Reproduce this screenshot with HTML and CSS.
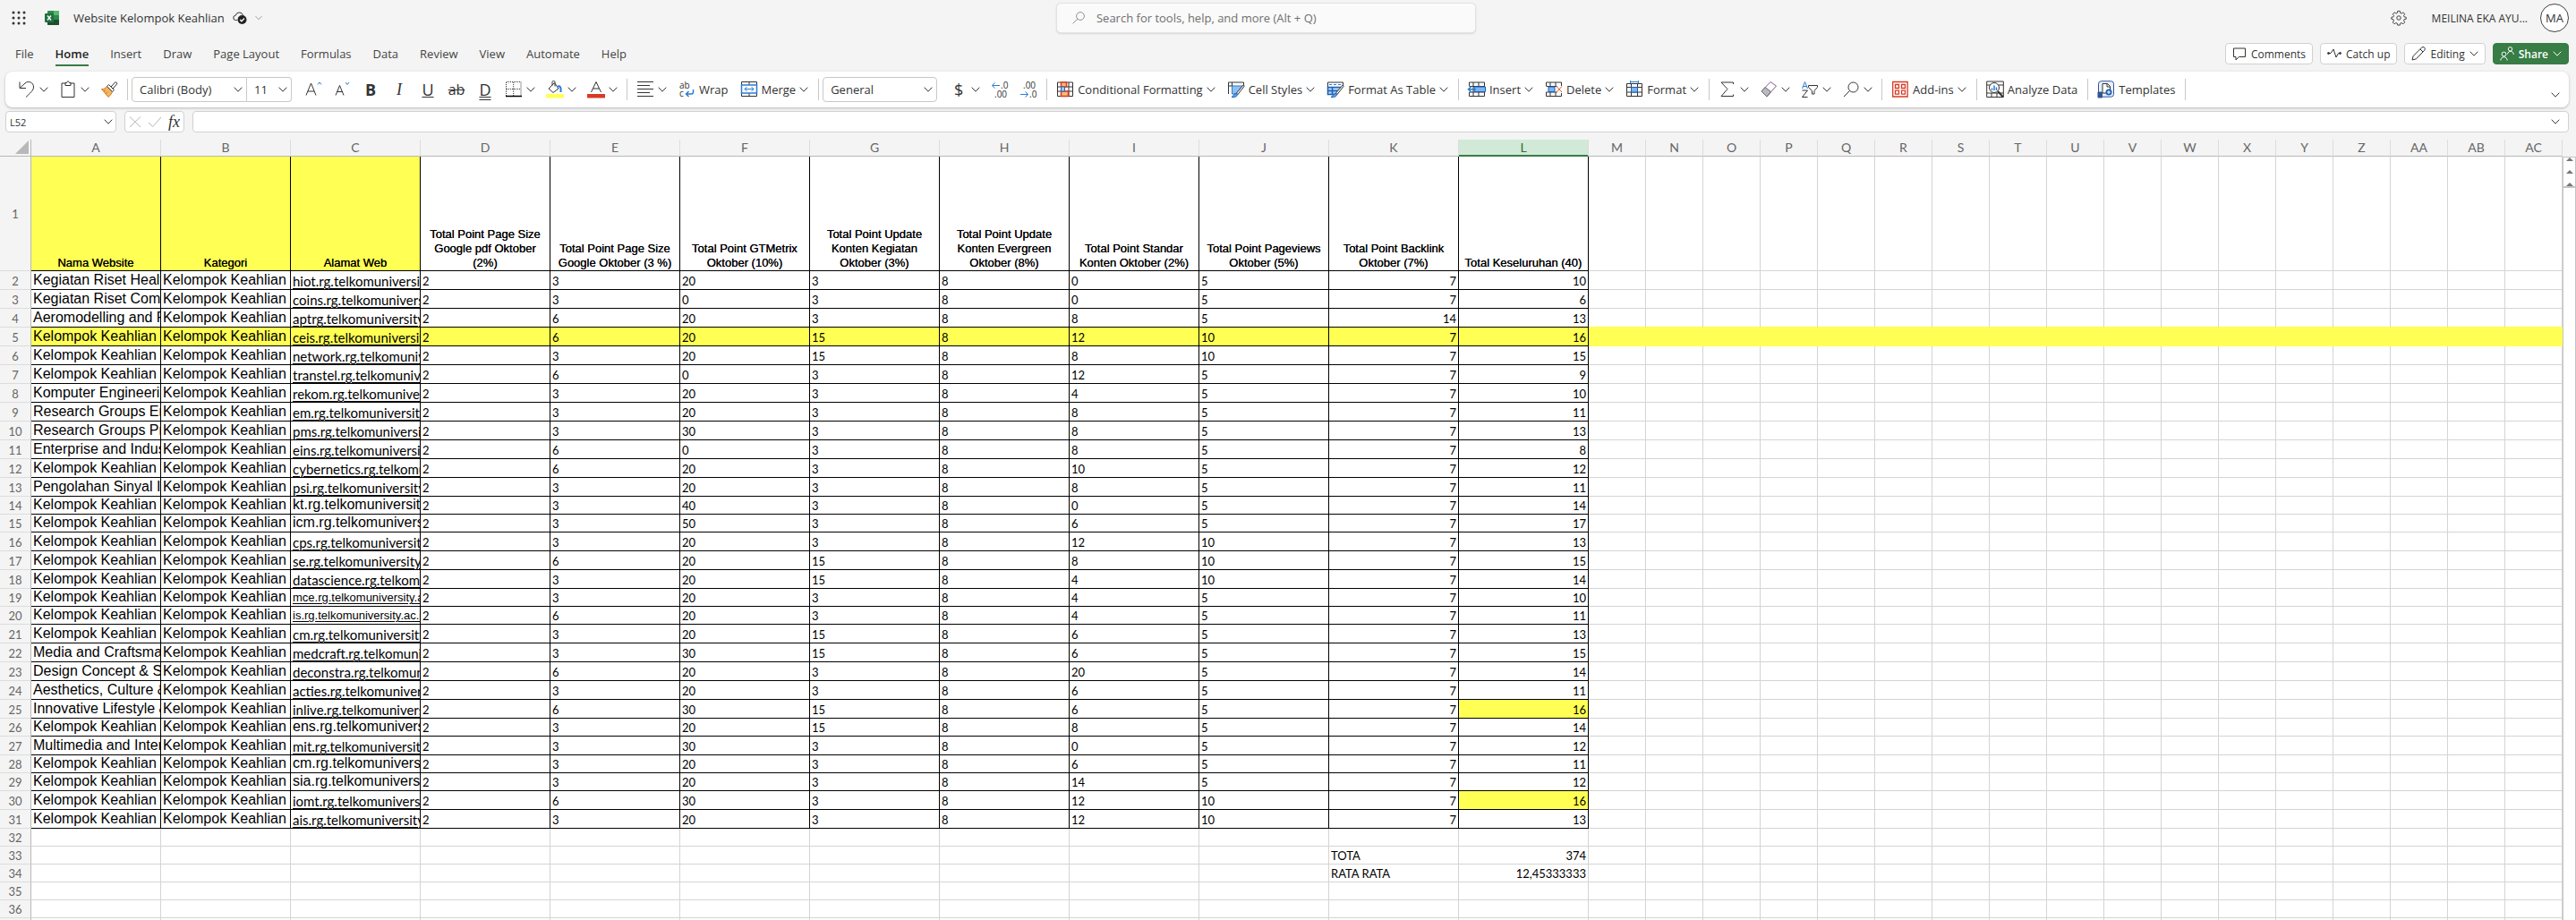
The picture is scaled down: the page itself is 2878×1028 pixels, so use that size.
FILE: index.html
```html
<!DOCTYPE html>
<html lang="en">
<head>
  <meta charset="UTF-8">
  <meta name="viewport" content="width=device-width, initial-scale=1.0">
  <title>Website Kelompok Keahlian</title>
  <link rel="stylesheet" href="styles.css">
</head>
<body>
  <!-- Shared symbols -->
  <svg class="defs" aria-hidden="true">
    <symbol id="chevron" viewBox="0 0 10 6"><path d="M.7.7 5 5.2 9.3.7"/></symbol>
    <symbol id="search" viewBox="0 0 20 20"><circle cx="12.5" cy="7.5" r="5.5"/><path d="M8.5 11.5 2 18"/></symbol>
  </svg>

  <header class="titlebar">
    <div class="title-left">
      <button class="plain" aria-label="App launcher">
        <svg class="waffle" viewBox="0 0 16 16"><path d="M2 2h.01M8 2h.01M14 2h.01M2 8h.01M8 8h.01M14 8h.01M2 14h.01M8 14h.01M14 14h.01"/></svg>
      </button>
      <svg class="logo" viewBox="0 0 16 16">
        <rect x="3" y="0" width="13" height="16" rx="1" fill="#2f8a4b"/>
        <rect x="10" y="0" width="6" height="5" fill="#53b96d"/>
        <rect x="3" y="10" width="13" height="6" rx="1" fill="#1d4f2e"/>
        <rect x="0" y="3" width="10" height="10" rx="1" fill="#1f7040"/>
        <path d="M3 5.5l4 5M7 5.5l-4 5" stroke="#fff" stroke-width="1.4"/>
      </svg>
      <button class="plain doc-name">Website Kelompok Keahlian
        <svg class="cloud" viewBox="0 0 16 16"><path d="M5 10.5H3.500a2.600 2.600 0 0 1-.3-5.200A4.300 4.300 0 0 1 11.500 5" fill="none" stroke="#333"/><circle cx="10.5" cy="10" r="5" fill="#222"/><path d="M8.200 10l1.700 1.700L13 8.500" fill="none" stroke="#fff" stroke-width="1.3"/></svg>
        <svg class="chev light"><use href="#chevron"/></svg>
      </button>
    </div>
    <label class="search">
      <svg class="icon-sm"><use href="#search"/></svg>
      <input type="search" placeholder="Search for tools, help, and more (Alt + Q)" aria-label="Search">
    </label>
    <div class="title-right">
      <button class="plain" aria-label="Settings">
        <svg class="gear" viewBox="0 0 20 20"><path d="M8.600 1.500h2.800l.5 2.400 1.500.6 2.100-1.300 2 2-1.400 2 .7 1.600 2.300.4v2.200l-2.300.5-.7 1.500 1.400 2.100-2 2-2.100-1.400-1.500.7-.5 2.200H8.600l-.5-2.200-1.500-.7-2.100 1.400-2-2 1.400-2.100-.7-1.500-2.300-.5V9.200l2.300-.4.7-1.600-1.400-2 2-2 2.100 1.300 1.500-.6z"/><circle cx="10" cy="10" r="2.5"/></svg>
      </button>
      <span class="user">MEILINA EKA AYU...</span>
      <button class="avatar">MA</button>
    </div>
  </header>

  <div class="tabbar">
    <nav class="tabs">
      <a href="#file">File</a>
      <a href="#home" class="active">Home</a>
      <a href="#insert">Insert</a>
      <a href="#draw">Draw</a>
      <a href="#layout">Page Layout</a>
      <a href="#formulas">Formulas</a>
      <a href="#data">Data</a>
      <a href="#review">Review</a>
      <a href="#view">View</a>
      <a href="#automate">Automate</a>
      <a href="#help">Help</a>
    </nav>
    <div class="actions">
      <button class="action">
        <svg viewBox="0 0 16 16"><path d="M1.500 2h13v9.500H7.500L4 15v-3.500H1.500z"/></svg>Comments
      </button>
      <button class="action">
        <svg viewBox="0 0 16 16"><path d="M2 7.500l2 0 3-4.500 3 9 2.500-4.500H14"/><circle cx="1.5" cy="7.5" r="1" fill="#333"/><circle cx="14.5" cy="7.5" r="1" fill="#333"/></svg>Catch up
      </button>
      <button class="action">
        <svg viewBox="0 0 16 16"><path d="M1 15l1.200-4.500L11.500 1.200a1.800 1.800 0 0 1 3.200 3L5.500 13.800zM10 3l3 3"/></svg>Editing
        <svg class="chev"><use href="#chevron"/></svg>
      </button>
      <button class="action share">
        <svg viewBox="0 0 16 16"><circle cx="4.5" cy="8.5" r="2.4"/><path d="M.8 15.500c0-5 7.400-5 7.400 0"/><circle cx="11.5" cy="2.8" r="2.2"/><path d="M8.500 8.500c.5-4.300 6.800-4.300 6.800.5"/></svg>Share
        <svg class="chev"><use href="#chevron"/></svg>
      </button>
    </div>
  </div>

  <div class="ribbon">
    <button class="tool" aria-label="Undo">
      <svg class="icon" viewBox="0 0 20 20"><path d="M2 1.500V8.500H9M2.300 8.200 8 3c4-3.500 9.500-.5 9.500 4 0 3-1 4.500-8.500 11.500"/></svg>
      <svg class="chev"><use href="#chevron"/></svg>
    </button>
    <button class="tool" aria-label="Paste">
      <svg class="icon" viewBox="0 0 20 20"><path d="M7 3H3v15.500h14V3h-4M7 5.500h6V2.500h-1.500c0-2-3-2-3 0H7z"/></svg>
      <svg class="chev"><use href="#chevron"/></svg>
    </button>
    <button class="tool" aria-label="Format painter">
      <svg class="icon" viewBox="0 0 20 20"><path d="M1.500 9.500c3 .5 4-1 6-3l6 6c-1 2-2 4-4.500 6z" fill="#f6b65c" stroke="#c7772b"/><path d="M4 12l2-1M6.500 14.500l2-2" stroke="#c7772b"/><path d="M7.500 6.500l2-2 6 6-2 2zM12 7l4.500-5c1-1 3 1 2 2L14 9" fill="#fff"/></svg>
    </button>
    <span class="sep"></span>
    <label class="combo font-name">
      <select aria-label="Font name"><option>Calibri (Body)</option></select>
      <svg class="chev"><use href="#chevron"/></svg>
    </label>
    <label class="combo font-size">
      <select aria-label="Font size"><option>11</option></select>
      <svg class="chev"><use href="#chevron"/></svg>
    </label>
    <button class="tool" aria-label="Grow font">
      <svg class="icon" viewBox="0 0 20 20"><path d="M2 16.500 7.500 3 13 16.500M4 12h7"/><path d="M15 4.500 17 2l2 2.500" stroke="#2b7cd3"/></svg>
    </button>
    <button class="tool" aria-label="Shrink font">
      <svg class="icon" viewBox="0 0 20 20"><path d="M3 16.500 7.500 5.500 12 16.500M4.500 12.500h6"/><path d="M14 2l2 2.500L18 2" stroke="#2b7cd3"/></svg>
    </button>
    <button class="tool glyph bold" aria-label="Bold">B</button>
    <button class="tool glyph italic" aria-label="Italic">I</button>
    <button class="tool glyph underline" aria-label="Underline">U</button>
    <button class="tool glyph strike" aria-label="Strikethrough">ab</button>
    <button class="tool glyph double" aria-label="Double underline">D</button>
    <button class="tool" aria-label="Borders">
      <svg class="icon" viewBox="0 0 20 20"><path d="M1.500 17V1.500h16.500V17M9.700 2v15M2 9.500h16" stroke-dasharray="1 1"/><path d="M1 17.500h18" stroke-width="1.5" stroke="#000"/></svg>
      <svg class="chev"><use href="#chevron"/></svg>
    </button>
    <button class="tool" aria-label="Fill color">
      <svg class="icon" viewBox="0 0 20 20"><path d="M3 9l6.500-6.500L14 9l-6 4.500zM7 5.500V1.500c0-1.500 3-1.500 3 0v5"/><path d="M12.500 7c3-2 4.500 0 4 6" stroke="#2b7cd3" stroke-width="2"/><path d="M0 15h20v4.500H0z" fill="#ffff54" stroke="none"/></svg>
      <svg class="chev"><use href="#chevron"/></svg>
    </button>
    <button class="tool" aria-label="Font color">
      <svg class="icon" viewBox="0 0 20 20"><path d="M4.500 13 10 1.500 15.500 13M6.500 9h7"/><path d="M0 15h20v4.500H0z" fill="#d83b23" stroke="none"/></svg>
      <svg class="chev"><use href="#chevron"/></svg>
    </button>
    <span class="sep"></span>
    <button class="tool" aria-label="Align">
      <svg class="icon" viewBox="0 0 20 20"><path d="M1 1.500h18M1 5.500h14M1 9.500h18M1 13.500h14M1 17.500h18"/></svg>
      <svg class="chev"><use href="#chevron"/></svg>
    </button>
    <button class="tool named">
      <svg class="icon" viewBox="0 0 20 20"><text x="2" y="9" class="mini">ab</text><text x="2" y="18" class="mini">c</text><path d="M17.500 10v3c0 1.500-1 2-2 2H10M12.500 12 9.500 15l3 3" stroke="#2b7cd3" stroke-width="1.5"/></svg>Wrap
    </button>
    <button class="tool named">
      <svg class="icon" viewBox="0 0 20 20"><path d="M1.500 1.500h17v16h-17zM10 1.500V5M10 14v3.500"/><path d="M1.500 5h17v9h-17z" fill="#fff" stroke="#2b7cd3" stroke-width="1.5"/><path d="M5 9.500h10M7.500 7 5 9.500 7.500 12M12.500 7 15 9.500 12.500 12" stroke="#2b7cd3"/></svg>Merge
      <svg class="chev"><use href="#chevron"/></svg>
    </button>
    <span class="sep"></span>
    <label class="combo format">
      <select aria-label="Number format"><option>General</option></select>
      <svg class="chev"><use href="#chevron"/></svg>
    </label>
    <button class="tool" aria-label="Currency">
      <span class="glyph">$</span>
      <svg class="chev"><use href="#chevron"/></svg>
    </button>
    <button class="tool" aria-label="Increase decimal">
      <svg class="icon" viewBox="0 0 20 20"><path d="M10 5.500H2M4.500 2.500l-3 3 3 3" stroke="#2b7cd3"/><text x="11" y="9" class="mini">.0</text><text x="4" y="19" class="mini">.00</text></svg>
    </button>
    <button class="tool" aria-label="Decrease decimal">
      <svg class="icon" viewBox="0 0 20 20"><path d="M1 15.500h8M6.500 12.500l3 3-3 3" stroke="#2b7cd3"/><text x="4" y="9" class="mini">.00</text><text x="11" y="19" class="mini">.0</text></svg>
    </button>
    <span class="sep"></span>
    <button class="tool named">
      <svg class="icon" viewBox="0 0 20 20"><path d="M1.500 2h17v15.500h-17zM5.500 2v15M14 2v15M1.500 7h17M1.500 12h17"/><path d="M5.500 2h6v5h-6zM5.500 12h8v5.500h-8z" fill="#f7bd76" stroke="#d83b23" stroke-width="1.5"/><path d="M5.500 7h4v5h-4z" fill="#9cc8f5" stroke="#2b63b8"/></svg>Conditional Formatting
      <svg class="chev"><use href="#chevron"/></svg>
    </button>
    <button class="tool named">
      <svg class="icon" viewBox="0 0 20 20"><path d="M1.500 15V2h17v5M5.500 2v12M1.500 6h5"/><path d="M5.500 6H17l-7 9H5.500z" fill="#8fc0f4" stroke="#2b7cd3"/><path d="M18.500 4.500 10.500 14l1.500 1.500 7-9z" fill="#fff"/><path d="M5 18.500c2 0 2-4.500 5.500-4 2.500 2-1 5-5.500 4z" fill="#5aa2ea" stroke="#1e5fb3"/></svg>Cell Styles
      <svg class="chev"><use href="#chevron"/></svg>
    </button>
    <button class="tool named">
      <svg class="icon" viewBox="0 0 20 20"><path d="M1.500 7V2h17v4"/><path d="M3 4.500h14" stroke="#2b7cd3" stroke-dasharray="3 2"/><path d="M1.500 7.500H17l-6 8H1.500zM1.500 11.500h12M6.500 7.500v8" fill="#a9d0f7" stroke="#1e5fb3" stroke-width="1.5"/><path d="M18.500 4.500 10.500 14l1.500 1.500 7-9z" fill="#fff"/><path d="M5 18.500c2 0 2-4.500 5.500-4 2.500 2-1 5-5.500 4z" fill="#5aa2ea" stroke="#1e5fb3"/></svg>Format As Table
      <svg class="chev"><use href="#chevron"/></svg>
    </button>
    <span class="sep"></span>
    <button class="tool named">
      <svg class="icon" viewBox="0 0 20 20"><path d="M1.500 6V2h17v15.500h-17V13M6 2v15.500M12 2v15.500M1.500 6.500h17M1.500 13h17"/><path d="M7 7h12.500v5.500H7z" fill="#79b5f2" stroke="#1e5fb3"/><path d="M9 9.700H1M4 6.500l-3.500 3.200L4 13" stroke="#2b7cd3" stroke-width="1.5"/></svg>Insert
      <svg class="chev"><use href="#chevron"/></svg>
    </button>
    <button class="tool named">
      <svg class="icon" viewBox="0 0 20 20"><path d="M1.500 6V2h17v4M1.500 13v4.500h17V14M6 2v4M12 2v4M6 13v4.500M12 13v4.500M1.500 6.500h12M1.500 13h12"/><path d="M4 7h7v5.500H4z" fill="#79b5f2" stroke="#1e5fb3"/><path d="M13 6.500l6 6.500M19 6.500 13 13" stroke="#d9591c"/></svg>Delete
      <svg class="chev"><use href="#chevron"/></svg>
    </button>
    <button class="tool named">
      <svg class="icon" viewBox="0 0 20 20"><path d="M1.500 3.500h17v14h-17zM6.500 3.500v14M13.500 3.500v14M1.500 7.500h17M1.500 13h17"/><path d="M6.500 7.500h7V13h-7z" fill="#79b5f2" stroke="#1e5fb3"/><path d="M5.500 0v3M14.500 0v3M6 1.500h8" stroke="#2b7cd3"/></svg>Format
      <svg class="chev"><use href="#chevron"/></svg>
    </button>
    <span class="sep"></span>
    <button class="tool" aria-label="AutoSum">
      <svg class="icon" viewBox="0 0 20 20"><path d="M16.500 4V2H3l7 7.500-7 8h13.500v-2"/></svg>
      <svg class="chev"><use href="#chevron"/></svg>
    </button>
    <button class="tool" aria-label="Clear">
      <svg class="icon" viewBox="0 0 20 20"><path d="M2 12 12 1.500 18.500 6 8 18z" fill="#fff" stroke="#8a5a93"/><path d="M2 12l4-4.500 6.500 5L8 18z" fill="#b9b9c4" stroke="#666"/></svg>
      <svg class="chev"><use href="#chevron"/></svg>
    </button>
    <button class="tool" aria-label="Sort and filter">
      <svg class="icon" viewBox="0 0 20 20"><path d="M1.500 9 4.500 1.500l3 7.500M2.500 6.500h4" stroke="#2b7cd3"/><path d="M1.500 11h6l-6 7.500h6M8.500 5.500h10v2l-3.500 4V15h-2.500v-3.500l-4-4z"/></svg>
      <svg class="chev"><use href="#chevron"/></svg>
    </button>
    <button class="tool" aria-label="Find">
      <svg class="icon"><use href="#search"/></svg>
      <svg class="chev"><use href="#chevron"/></svg>
    </button>
    <span class="sep"></span>
    <button class="tool named">
      <svg class="icon" viewBox="0 0 20 20"><path d="M1.700 1.500h16.500v16.500H1.700zM4.500 4.500h4v4h-4zM11.500 4.500h4v4h-4zM4.500 11.200h4v4h-4zM11.500 11.200h4v4h-4z" stroke="#d83b23" stroke-width="1.3"/></svg>Add-ins
      <svg class="chev"><use href="#chevron"/></svg>
    </button>
    <span class="sep"></span>
    <button class="tool named">
      <svg class="icon" viewBox="0 0 20 20"><path d="M.7 1h18.600v17.500H.7zM.7 5h18.600M.7 14h18.600M6 14v4.500M12 14v4.500"/><circle cx="9" cy="8" r="5.5" fill="#fff"/><path d="M6.500 11V8.500M9 11V5.500M11.500 11V7.500" stroke="#2b7cd3" stroke-width="1.5"/><path d="M13 12l6 6.500" stroke-width="2"/></svg>Analyze Data
    </button>
    <span class="sep"></span>
    <button class="tool named">
      <svg class="icon" viewBox="0 0 20 20"><rect x="1.5" y=".7" width="17" height="17.5" rx="3" fill="#e9f0fa" stroke="#2f5597"/><path d="M6 3.500h5.500l3 3V14H6z" fill="#fff"/><path d="M11 3.500v3.500h3.500"/><circle cx="13" cy="13" r="3.5" fill="#1e5fb3" stroke="none"/><path d="M13 11v4M11 13h4" stroke="#fff"/><rect x=".5" y="12.5" width="5.5" height="7" rx="1" fill="#2f5597" stroke="none"/></svg>Templates
    </button>
    <span class="sep"></span>
    <button class="plain collapse" aria-label="Ribbon options"><svg class="chev"><use href="#chevron"/></svg></button>
  </div>

  <div class="formula-row">
    <div class="box name-box">
      <input type="text" value="L52" aria-label="Name box">
      <button class="plain" aria-label="Names"><svg class="chev"><use href="#chevron"/></svg></button>
    </div>
    <div class="box fx-box">
      <button class="plain" aria-label="Cancel"><svg class="mark" viewBox="0 0 14 14"><path d="M1 1.500l12 11.500M13 1.500 1 13"/></svg></button>
      <button class="plain" aria-label="Enter"><svg class="mark" viewBox="0 0 14 14"><path d="M0 8l4.500 4.500L14 2"/></svg></button>
      <button class="plain fx" aria-label="Insert function">fx</button>
    </div>
    <div class="box formula">
      <input type="text" aria-label="Formula bar">
      <button class="plain" aria-label="Expand"><svg class="chev"><use href="#chevron"/></svg></button>
    </div>
  </div>

  <main class="workarea">
    <table class="sheet">
      <colgroup>
        <col class="col-index">
        <col class="col-wide" span="12">
        <col class="col-std" span="17">
      </colgroup>
      <thead></thead>
      <tbody></tbody>
    </table>
    <div class="scroll">
      <div class="scroll-top"><i></i><i></i><i></i></div>
      <div class="scroll-track"></div>
    </div>
  </main>

  <script src="script.js"></script>
</body>
</html>
```
FILE: styles.css
```css
* {
  box-sizing: border-box;
}

body {
  margin: 0;
  height: 100vh;
  display: flex;
  flex-direction: column;
  overflow: hidden;
  background: #f4f4f4;
  color: #333;
  font-family: "Open Sans", "Noto Sans", sans-serif;
  font-size: 13px;
}

button,
input,
select {
  font: inherit;
  color: inherit;
}

svg {
  fill: none;
  stroke: #333;
  flex: none;
}

.defs {
  position: absolute;
  width: 0;
  height: 0;
}

.plain {
  display: flex;
  align-items: center;
  padding: 0;
  border: 0;
  background: none;
}

.chev {
  width: 10px;
  height: 6px;
}

.chev.light {
  width: 8px;
  stroke: #888;
}

/* Title bar */
.titlebar {
  display: grid;
  grid-template-columns: 41% 469px 1fr;
  align-items: center;
  height: 40px;
}

.title-left {
  display: flex;
  align-items: center;
  padding-left: 13px;
}

.waffle {
  width: 16px;
  height: 16px;
  stroke-width: 3;
  stroke-linecap: round;
}

.logo {
  width: 16px;
  height: 16px;
  margin: 0 16px 0 21px;
  stroke: none;
}

.doc-name {
  gap: 9px;
}

.cloud {
  width: 16px;
  height: 16px;
  stroke: none;
}

.search {
  display: flex;
  align-items: center;
  gap: 10px;
  height: 34px;
  padding: 0 16px;
  background: #fafafa;
  border: 1px solid #e2e2e2;
  border-radius: 5px;
  box-shadow: 0 1px 2px rgba(0, 0, 0, 0.12);
}

.search input {
  flex: 1;
  border: 0;
  outline: 0;
  background: none;
}

.search input::placeholder {
  color: #6f6f6f;
}

.icon-sm {
  width: 16px;
  height: 16px;
  stroke: #777;
}

.title-right {
  display: flex;
  align-items: center;
  justify-content: flex-end;
  padding-right: 8px;
}

.gear {
  width: 18px;
  height: 18px;
}

.user {
  margin: 0 14px 0 28px;
  font-size: 12px;
}

.avatar {
  width: 32px;
  height: 32px;
  padding: 0;
  border: 1px solid #444;
  border-radius: 50%;
  background: #fff;
}

/* Tabs */
.tabbar {
  display: flex;
  justify-content: space-between;
  align-items: center;
  height: 40px;
  padding: 0 8px 0 17px;
}

.tabs {
  display: flex;
  gap: 24px;
}

.tabs a {
  padding: 3px 0 2px;
  color: #444;
  line-height: 20px;
  text-decoration: none;
  border-bottom: 2px solid transparent;
}

.tabs .active {
  color: #222;
  font-weight: 600;
  border-color: #377d45;
}

.actions {
  display: flex;
  gap: 8px;
}

.action {
  display: flex;
  align-items: center;
  gap: 5px;
  height: 24px;
  padding: 0 7px;
  background: #fff;
  border: 1px solid #d1d1d1;
  border-radius: 4px;
  font-size: 12px;
}

.action svg {
  width: 16px;
  height: 16px;
}

.action .chev {
  width: 10px;
  height: 6px;
}

.share {
  color: #fff;
  background: #377d45;
  border-color: #377d45;
  font-weight: 600;
}

.share svg {
  stroke: #fff;
}

/* Ribbon */
.ribbon {
  display: flex;
  align-items: center;
  height: 40px;
  margin: 0 8px 0 6px;
  padding: 0 10px 0 8px;
  background: #fff;
  border-radius: 8px;
  box-shadow: 0 1px 3px rgba(0, 0, 0, 0.25);
  flex: none;
  white-space: nowrap;
}

.tool {
  display: flex;
  align-items: center;
  gap: 4px;
  margin: 0 6px;
  padding: 0;
  border: 0;
  background: none;
}

.named {
  margin-right: 7px;
}

.icon {
  width: 20px;
  height: 20px;
  overflow: visible;
}

.mini {
  fill: #333;
  stroke: none;
  font-size: 10px;
}

.sep {
  width: 1px;
  height: 24px;
  margin: 0 4px;
  background: #c8c8c8;
}

.combo {
  display: flex;
  align-items: center;
  height: 28px;
  padding: 0 4px 0 8px;
  border: 1px solid #c8c8c8;
  border-radius: 4px;
}

.combo select {
  flex: 1;
  min-width: 0;
  padding: 0;
  border: 0;
  background: none;
  appearance: none;
}

.font-name {
  width: 129px;
  border-radius: 4px 0 0 4px;
}

.font-size {
  width: 50px;
  margin-right: 8px;
  border-left: 0;
  border-radius: 0 4px 4px 0;
}

.format {
  width: 128px;
  margin-right: 8px;
}

.glyph {
  justify-content: center;
  min-width: 20px;
  font-size: 18px;
  line-height: 20px;
}

.bold {
  font-weight: 700;
}

.italic {
  font-family: "Liberation Serif", serif;
  font-style: italic;
}

.underline {
  text-decoration: underline;
}

.strike {
  font-size: 16px;
  text-decoration: line-through;
}

.double {
  text-decoration: underline double;
}

.collapse {
  align-self: flex-end;
  margin: 0 0 11px auto;
}

/* Formula bar */
.formula-row {
  display: flex;
  padding: 4px 8px 8px 6px;
}

.box {
  display: flex;
  align-items: center;
  height: 24px;
  padding: 0 9px 0 4px;
  background: #fff;
  border: 1px solid #d1d1d1;
  border-radius: 4px;
}

.box input {
  flex: 1;
  min-width: 0;
  padding: 0;
  border: 0;
  outline: 0;
  background: none;
}

.name-box {
  width: 124px;
  padding-right: 3px;
  font-size: 11px;
}

.fx-box {
  width: 67px;
  gap: 8px;
  margin: 0 9px;
}

.formula {
  flex: 1;
}

.mark {
  width: 14px;
  height: 14px;
  stroke: #b5b5b5;
}

.fx {
  font-family: "Liberation Serif", serif;
  font-size: 18px;
  font-style: italic;
  line-height: 20px;
}

/* Sheet */
.workarea {
  display: flex;
  flex: 1;
  min-height: 0;
  overflow: hidden;
  align-items: flex-start;
}

.sheet {
  width: 2863px;
  flex: none;
  table-layout: fixed;
  border-spacing: 0;
  color: #000;
  font-family: Lato, sans-serif;
  font-size: 13px;
  line-height: 18px;
}

.col-index {
  width: 35px;
}

.col-wide {
  width: 145px;
}

.col-std {
  width: 64px;
}

.sheet th {
  padding: 0;
  background: #f4f4f4;
  color: #666;
  font-weight: 400;
}

.sheet thead th {
  height: 19px;
  font-size: 14px;
  border-right: 1px solid #dcdcdc;
  border-bottom: 1px solid #b8b8b8;
}

.sheet thead .corner {
  padding: 0 2px 2px 0;
  border-right-color: #b8b8b8;
}

.corner svg {
  display: block;
  width: 15px;
  height: 15px;
  margin-left: auto;
  fill: #b8b8b8;
  stroke: none;
}

.sheet thead .selected {
  background: #d2e9d8;
  color: #2f6a3c;
  border-bottom-color: #377d45;
  box-shadow: inset 0 -1px #377d45;
}

.sheet tbody th {
  border-right: 1px solid #b8b8b8;
  border-bottom: 1px solid #dcdcdc;
  vertical-align: bottom;
}

.sheet td {
  padding: 0 2px;
  overflow: hidden;
  white-space: nowrap;
  vertical-align: bottom;
  background: #fff;
  border-right: 1px solid #d4d4d4;
  border-bottom: 1px solid #d4d4d4;
}

.sheet tbody tr {
  height: 21px;
}

.sheet tbody .short {
  height: 20px;
}

.sheet tbody .head {
  height: 128px;
}

.sheet .head th {
  vertical-align: middle;
}

.sheet .head td {
  font-family: "Liberation Sans", Arial, sans-serif;
  line-height: 16px;
  text-align: center;
  text-shadow: 0 0 0 #000;
  white-space: normal;
}

.sheet .filled {
  border-color: #000;
}

.sheet .yellow {
  background: #ffff54;
}

.sheet .wash {
  border-color: #ffff54;
}

.sheet .wash-below {
  border-bottom-color: #ffff54;
}

.sheet .link {
  font-size: 15px;
}

.sheet .arial {
  padding-bottom: 1px;
  font-family: "Liberation Sans", Arial, sans-serif;
  font-size: 16px;
}

.sheet .arial-small {
  font-family: "Liberation Sans", Arial, sans-serif;
  font-size: 13px;
}

.sheet .number {
  text-align: right;
}

.sheet a {
  color: inherit;
  text-underline-offset: 2px;
}

.sheet .arial a {
  text-decoration: none;
}

/* Scrollbar */
.scroll {
  display: flex;
  flex: 1;
  flex-direction: column;
  align-self: stretch;
  padding-top: 19px;
}

.scroll-top {
  display: flex;
  flex-direction: column;
  justify-content: space-between;
  align-items: center;
  height: 35px;
  background: #fff;
  border: 1px solid #c4c4c4;
  border-bottom-width: 2px;
}

.scroll-top i {
  border: 4px solid transparent;
  border-top: 0;
  border-bottom-color: #777;
}

.scroll-track {
  flex: 1;
  background: #fff;
  border: 1px solid #c4c4c4;
  border-width: 0 1px;
}
```
FILE: script.js
```javascript
const headings = [
  'Nama Website', 'Kategori', 'Alamat Web',
  'Total Point Page Size Google pdf Oktober (2%)',
  'Total Point Page Size Google Oktober (3 %)',
  'Total Point GTMetrix Oktober (10%)',
  'Total Point Update Konten Kegiatan Oktober (3%)',
  'Total Point Update Konten Evergreen Oktober (8%)',
  'Total Point Standar Konten Oktober (2%)',
  'Total Point Pageviews Oktober (5%)',
  'Total Point Backlink Oktober (7%)',
  'Total Keseluruhan (40)'
];

// name, subdomain, points D-L
const rows = [
  ['Kegiatan Riset Health', 'hiot.rg', 2, 3, 20, 3, 8, 0, 5, 7, 10],
  ['Kegiatan Riset Comp', 'coins.rg', 2, 3, 0, 3, 8, 0, 5, 7, 6],
  ['Aeromodelling and P', 'aptrg', 2, 6, 20, 3, 8, 8, 5, 14, 13],
  ['Kelompok Keahlian', 'ceis.rg', 2, 6, 20, 15, 8, 12, 10, 7, 16],
  ['Kelompok Keahlian', 'network.rg', 2, 3, 20, 15, 8, 8, 10, 7, 15],
  ['Kelompok Keahlian', 'transtel.rg', 2, 6, 0, 3, 8, 12, 5, 7, 9],
  ['Komputer Engineering', 'rekom.rg', 2, 3, 20, 3, 8, 4, 5, 7, 10],
  ['Research Groups En', 'em.rg', 2, 3, 20, 3, 8, 8, 5, 7, 11],
  ['Research Groups Pr', 'pms.rg', 2, 3, 30, 3, 8, 8, 5, 7, 13],
  ['Enterprise and Indus', 'eins.rg', 2, 6, 0, 3, 8, 8, 5, 7, 8],
  ['Kelompok Keahlian', 'cybernetics.rg', 2, 6, 20, 3, 8, 10, 5, 7, 12],
  ['Pengolahan Sinyal I', 'psi.rg', 2, 3, 20, 3, 8, 8, 5, 7, 11],
  ['Kelompok Keahlian', 'kt.rg', 2, 3, 40, 3, 8, 0, 5, 7, 14],
  ['Kelompok Keahlian', 'icm.rg', 2, 3, 50, 3, 8, 6, 5, 7, 17],
  ['Kelompok Keahlian', 'cps.rg', 2, 3, 20, 3, 8, 12, 10, 7, 13],
  ['Kelompok Keahlian', 'se.rg', 2, 6, 20, 15, 8, 8, 10, 7, 15],
  ['Kelompok Keahlian', 'datascience.rg', 2, 3, 20, 15, 8, 4, 10, 7, 14],
  ['Kelompok Keahlian', 'mce.rg', 2, 3, 20, 3, 8, 4, 5, 7, 10],
  ['Kelompok Keahlian', 'is.rg', 2, 6, 20, 3, 8, 4, 5, 7, 11],
  ['Kelompok Keahlian', 'cm.rg', 2, 3, 20, 15, 8, 6, 5, 7, 13],
  ['Media and Craftsman', 'medcraft.rg', 2, 3, 30, 15, 8, 6, 5, 7, 15],
  ['Design Concept & S', 'deconstra.rg', 2, 6, 20, 3, 8, 20, 5, 7, 14],
  ['Aesthetics, Culture &', 'acties.rg', 2, 3, 20, 3, 8, 6, 5, 7, 11],
  ['Innovative Lifestyle &', 'inlive.rg', 2, 6, 30, 15, 8, 6, 5, 7, 16],
  ['Kelompok Keahlian', 'ens.rg', 2, 3, 20, 15, 8, 8, 5, 7, 14],
  ['Multimedia and Inter', 'mit.rg', 2, 3, 30, 3, 8, 0, 5, 7, 12],
  ['Kelompok Keahlian', 'cm.rg', 2, 3, 20, 3, 8, 6, 5, 7, 11],
  ['Kelompok Keahlian', 'sia.rg', 2, 3, 20, 3, 8, 14, 5, 7, 12],
  ['Kelompok Keahlian', 'iomt.rg', 2, 6, 30, 3, 8, 12, 10, 7, 16],
  ['Kelompok Keahlian', 'ais.rg', 2, 3, 20, 3, 8, 12, 10, 7, 13]
];

const columnCount = 29;
const arialLinks = [14, 15, 26, 28, 29];
const smallLinks = [19, 20];
const shortRows = [...arialLinks, ...smallLinks];
const extras = {
  K33: 'TOTA', L33: '374',
  K34: 'RATA RATA', L34: '12,45333333'
};

function letter(i) {
  return i < 26 ? String.fromCharCode(65 + i) : 'A' + String.fromCharCode(39 + i);
}

function addCell(tr, tag, text, classes) {
  const cell = document.createElement(tag);
  cell.className = classes.join(' ');
  cell.textContent = text;
  tr.appendChild(cell);
  return cell;
}

// Column letters
const headRow = document.querySelector('.sheet thead').insertRow();
addCell(headRow, 'th', '', ['corner']).innerHTML =
  '<svg viewBox="0 0 15 15"><path d="M15 0v15H0z"/></svg>';
for (let c = 0; c < columnCount; c++) {
  addCell(headRow, 'th', letter(c), c === 11 ? ['selected'] : []);
}

// Rows
const body = document.querySelector('.sheet tbody');
for (let r = 1; r <= 37; r++) {
  const tr = body.insertRow();
  if (r === 1) tr.className = 'head';
  if (r > 31 || shortRows.includes(r)) tr.className = 'short';
  addCell(tr, 'th', r < 37 ? r : '', []);

  for (let c = 0; c < columnCount; c++) {
    const classes = [];
    const data = rows[r - 2];
    let text = extras[letter(c) + r] || '';
    let link = false;

    if (c < 12 && r <= 31) {
      classes.push('filled');
      if (r === 1) {
        text = headings[c];
        if (c < 3) classes.push('yellow');
      } else if (c === 0) {
        text = data[0];
        classes.push('arial');
      } else if (c === 1) {
        text = 'Kelompok Keahlian';
        classes.push('arial');
      } else if (c === 2) {
        link = true;
        text = data[1] + '.telkomuniversity.ac.id';
        if (arialLinks.includes(r)) classes.push('arial');
        else if (smallLinks.includes(r)) classes.push('arial-small');
        else classes.push('link');
      } else {
        text = data[c - 1];
      }
    }
    if (r > 1 && (c === 11 || (c === 10 && r < 32))) classes.push('number');
    if (r === 5 || (c === 11 && (r === 25 || r === 30))) classes.push('yellow');
    if (r === 5 && c > 11) classes.push('wash');
    if (r === 4 && c > 11) classes.push('wash-below');

    const td = addCell(tr, 'td', link ? '' : text, classes);
    if (link) {
      const a = document.createElement('a');
      a.href = 'https://' + text;
      a.textContent = text;
      td.appendChild(a);
    }
  }
}
```
